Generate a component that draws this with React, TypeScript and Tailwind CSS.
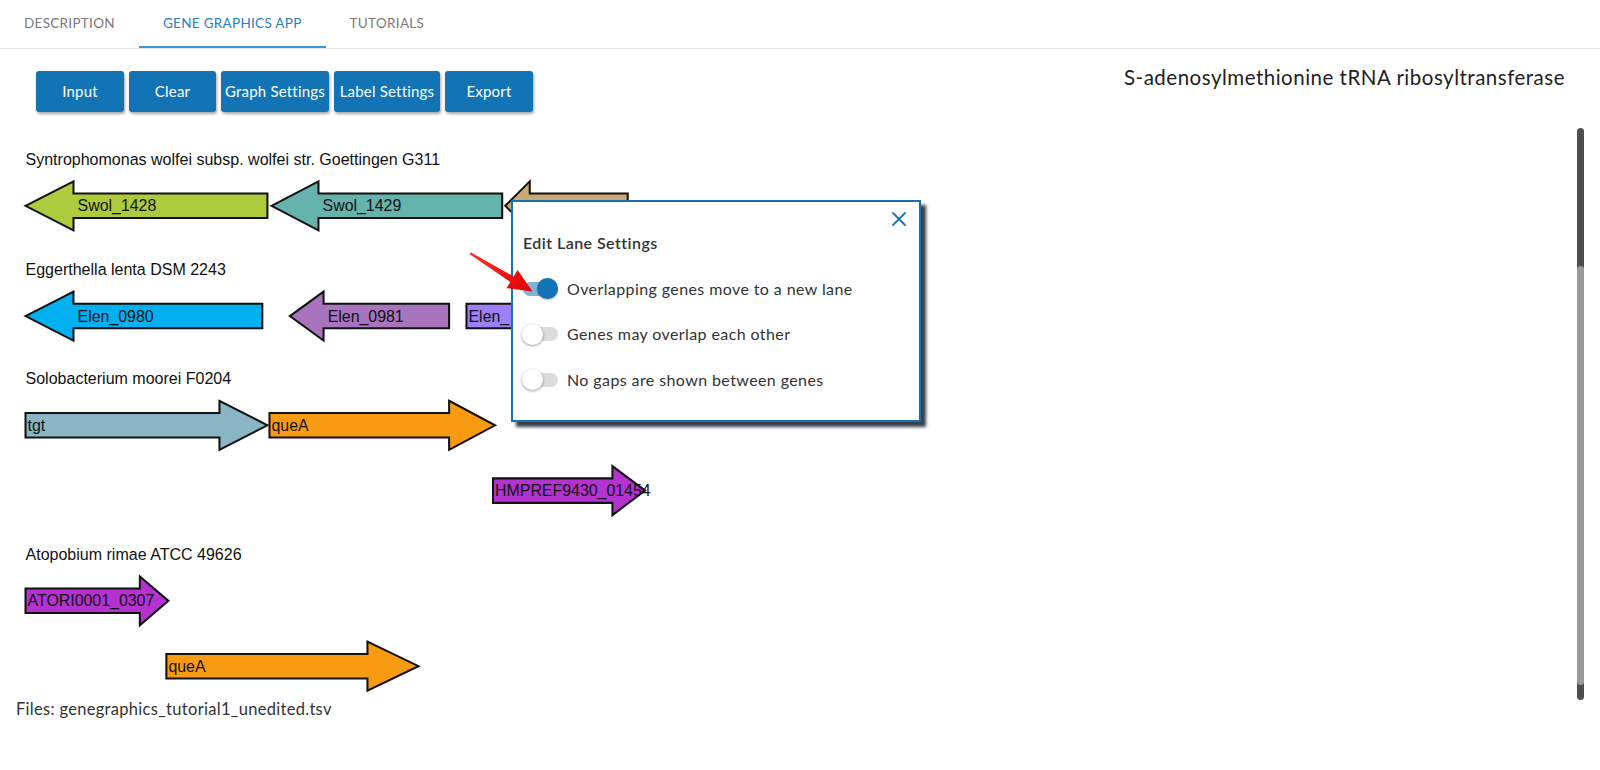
import { X } from 'lucide-react'

type Gene = {
    dir: 'L' | 'R'
    x1: number
    x2: number
    hl: number
    cy: number
    fill: string
    label: string
}

// drawing units: the graph svg is scaled up slightly to page pixels via its viewBox
const HH = 24
const BH = 12

const genes: Gene[] = [
    { dir: 'L', x1: 25, x2: 262, hl: 47, cy: 202, fill: '#aeca3d', label: 'Swol_1428' },
    { dir: 'L', x1: 266, x2: 492, hl: 46, cy: 202, fill: '#66b3ad', label: 'Swol_1429' },
    { dir: 'L', x1: 495, x2: 615, hl: 24, cy: 202, fill: '#c8aa72', label: '' },
    { dir: 'L', x1: 25, x2: 257, hl: 47, cy: 310, fill: '#00b0f0', label: 'Elen_0980' },
    { dir: 'L', x1: 284, x2: 440, hl: 33, cy: 310, fill: '#a874be', label: 'Elen_0981' },
    { dir: 'R', x1: 457, x2: 600, hl: 30, cy: 310, fill: '#9c80f7', label: 'Elen_' },
    { dir: 'R', x1: 25, x2: 262, hl: 47, cy: 417, fill: '#8ab5c5', label: 'tgt' },
    { dir: 'R', x1: 264, x2: 485, hl: 45, cy: 417, fill: '#f99b12', label: 'queA' },
    { dir: 'R', x1: 483, x2: 632, hl: 32, cy: 481, fill: '#b432d0', label: 'HMPREF9430_01454' },
    { dir: 'R', x1: 25, x2: 165, hl: 28, cy: 589, fill: '#b433d0', label: 'ATORI0001_0307' },
    { dir: 'R', x1: 163, x2: 410, hl: 50, cy: 653, fill: '#f99b12', label: 'queA' },
]

const lanes = [
    { y: 157, name: 'Syntrophomonas wolfei subsp. wolfei str. Goettingen G311' },
    { y: 265, name: 'Eggerthella lenta DSM 2243' },
    { y: 372, name: 'Solobacterium moorei F0204' },
    { y: 544, name: 'Atopobium rimae ATCC 49626' },
]

function arrowPoints(g: Gene) {
    const { x1, x2, hl, cy } = g
    if (g.dir === 'L') {
        const b = x1 + hl
        return [
            [x1, cy], [b, cy - HH], [b, cy - BH], [x2, cy - BH],
            [x2, cy + BH], [b, cy + BH], [b, cy + HH],
        ].map(p => p.join(',')).join(' ')
    }
    const b = x2 - hl
    return [
        [x1, cy - BH], [b, cy - BH], [b, cy - HH], [x2, cy],
        [b, cy + HH], [b, cy + BH], [x1, cy + BH],
    ].map(p => p.join(',')).join(' ')
}

function GeneGraph() {
    return (
        <svg className="block flex-shrink-0" width={1577} height={578} viewBox="0 120 1545 566">
            {lanes.map(l => (
                <text key={l.name} x={25} y={l.y + 5} fontSize={15.7} fill="#111" fontFamily="Liberation Sans, Arial, sans-serif">
                    {l.name}
                </text>
            ))}
            {genes.map((g, i) => (
                <g key={i}>
                    <polygon points={arrowPoints(g)} fill={g.fill} stroke="#111" strokeWidth={2} />
                    {g.label && (
                        <text
                            x={g.dir === 'L' ? g.x1 + g.hl + 4 : g.x1 + 2}
                            y={g.cy + 5.5}
                            fontSize={15.6}
                            fill="#111"
                            fontFamily="Liberation Sans, Arial, sans-serif"
                        >
                            {g.label}
                        </text>
                    )}
                </g>
            ))}
        </svg>
    )
}

function Toggle({ on }: { on: boolean }) {
    return (
        <div className="relative w-[35px] h-[21px] flex items-center flex-shrink-0">
            <div className={`w-[35px] h-[14px] rounded-full ${on ? 'bg-[#7fb3d9]' : 'bg-[#dcdcdc]'}`} />
            {on ? (
                <div className="absolute right-0 top-0 w-[21px] h-[21px] rounded-full bg-[#1273b5] shadow-[0_1px_2px_rgba(0,0,0,0.3)]" />
            ) : (
                <div className="absolute -left-[1px] top-0 w-[21px] h-[21px] rounded-full bg-white shadow-[0_1px_3px_rgba(0,0,0,0.4)]" />
            )}
        </div>
    )
}

function LaneSettings() {
    const options = [
        { on: true, text: 'Overlapping genes move to a new lane' },
        { on: false, text: 'Genes may overlap each other' },
        { on: false, text: 'No gaps are shown between genes' },
    ]
    return (
        <div className="absolute left-[511px] top-[200px] w-[410px] h-[222px] bg-white border-2 border-[#1a70b0] shadow-[5px_5px_3px_rgba(20,30,45,0.85)] px-[10px]">
            <button className="absolute right-[8px] top-[5px] text-[#1a70b0]">
                <X className="w-[24px] h-[24px]" strokeWidth={1.8} />
            </button>
            <h3 className="mt-[31px] text-[16px] leading-[20px] font-semibold text-[#333] tracking-[0.45px]">Edit Lane Settings</h3>
            <div className="mt-[25px] flex flex-col gap-[24.5px]">
                {options.map(o => (
                    <div key={o.text} className="flex items-center gap-[9px] h-[21px]">
                        <Toggle on={o.on} />
                        <span className="text-[16px] text-[#333] tracking-[0.4px]">{o.text}</span>
                    </div>
                ))}
            </div>
        </div>
    )
}

function RedPointer() {
    return (
        <svg className="absolute left-0 top-0 pointer-events-none" width={612} height={327} viewBox="0 0 600 320">
            <defs>
                <linearGradient id="redg" x1="0" y1="0" x2="1" y2="1">
                    <stop offset="0" stopColor="#ff3030" />
                    <stop offset="1" stopColor="#e00000" />
                </linearGradient>
            </defs>
            <polygon
                points="461.4,247 503.6,270.8 507.5,264.5 522,285.5 496.6,282.2 500.3,276.2 460.6,249"
                fill="url(#redg)"
            />
        </svg>
    )
}

export default function App() {
    const tabs = ['Description', 'Gene Graphics App', 'Tutorials']
    const buttons = [
        { label: 'Input', w: 'w-[88px]' },
        { label: 'Clear', w: 'w-[87px]' },
        { label: 'Graph Settings', w: 'w-[108px]' },
        { label: 'Label Settings', w: 'w-[106px]' },
        { label: 'Export', w: 'w-[88px]' },
    ]

    return (
        <div className="relative w-[1600px] h-[770px] bg-white overflow-hidden font-['Lato','Open_Sans',sans-serif]">
            <div className="flex h-[49px] border-b border-[#e2e2e2]">
                {tabs.map((t, i) => (
                    <div
                        key={t}
                        className={`px-[24px] flex items-center uppercase text-[13.5px] tracking-[0.3px] ${i === 1 ? 'text-[#2482c4] border-b-2 border-[#3b93d4]' : 'text-[#7a7a7a] border-b-2 border-transparent'}`}
                    >
                        {t}
                    </div>
                ))}
            </div>

            <div className="flex justify-between items-start h-[73px]">
                <div className="flex gap-[5px] pl-[36px] pt-[22px]">
                    {buttons.map(b => (
                        <button
                            key={b.label}
                            className={`${b.w} h-[41px] rounded-[3px] bg-[#1274b5] text-white text-[15px] tracking-[0.2px] shadow-[1px_2px_3px_rgba(0,0,0,0.35)]`}
                        >
                            {b.label}
                        </button>
                    ))}
                </div>
                <h1 className="pt-[15px] pr-[35px] text-[20.5px] leading-[26px] tracking-[0.5px] text-[#222]">
                    S-adenosylmethionine tRNA ribosyltransferase
                </h1>
            </div>

            <div className="flex h-[578px]">
                <GeneGraph />
                <div className="mt-[6px] w-[7px] h-[572px] rounded-full bg-[#4f4f4f] flex flex-col">
                    <div className="mt-[138px] h-[419px] rounded-full bg-[#9a9a9a]" />
                </div>
            </div>

            <p className="pl-[16px] pt-[1px] text-[16.5px] tracking-[0.3px] text-[#333] leading-[16px]">
                Files: genegraphics_tutorial1_unedited.tsv
            </p>

            <LaneSettings />
            <RedPointer />
        </div>
    )
}
